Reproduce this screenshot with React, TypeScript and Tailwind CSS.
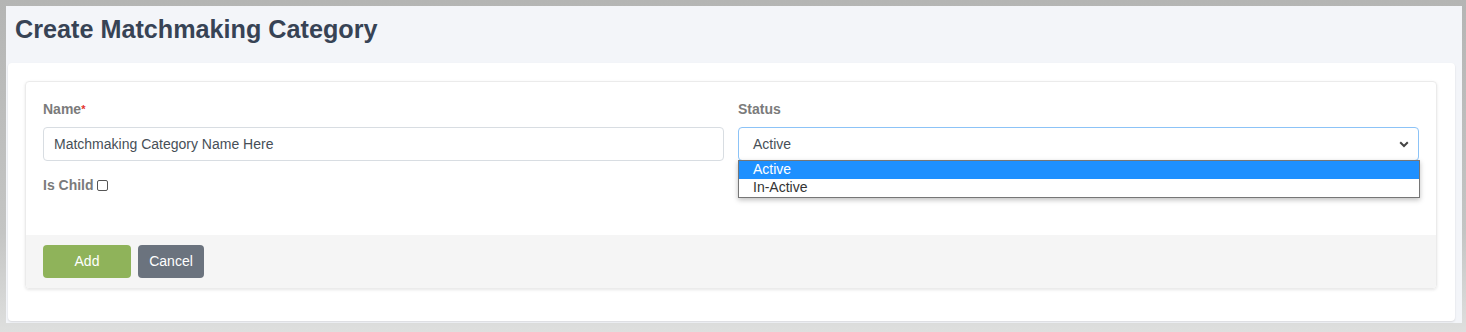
import { useState } from 'react'

const STATUS_OPTIONS = ['Active', 'In-Active']

function Label({ text, required }: { text: string; required?: boolean }) {
  return (
    <label className="block text-[14px] leading-[20px] font-bold text-[#7b7b7b] mb-[8px]">
      {text}
      {required && <span className="text-[#e3342f] text-[11px] align-top">*</span>}
    </label>
  )
}

export default function App() {
  const [name, setName] = useState('Matchmaking Category Name Here')
  const [status] = useState('Active')

  return (
    <div className="h-[332px] w-[1466px] overflow-hidden pt-[6px] pl-[6px] bg-[linear-gradient(to_bottom,#b4b5b4_0%,#c4c5c4_70%,#dedfde_100%)] font-['Liberation_Sans',Arial,sans-serif]">
      <div className="w-[1456px] h-[317px] bg-[#f3f5f9] flex flex-col">
        {/* Page header */}
        <div className="h-[57px] pl-[9px] pt-[8px]">
          <h1 className="text-[25.2px] leading-[30px] font-bold text-[#374355]">Create Matchmaking Category</h1>
        </div>

        {/* Panel */}
        <div className="ml-[2px] w-[1447px] h-[258px] bg-white rounded-[4px] shadow-[0_1px_2px_rgba(0,0,0,0.12)] pt-[18px] pl-[17px]">
          <div className="w-[1412px] h-[208px] border border-[#ebebeb] rounded-[4px] shadow-[0_1px_3px_rgba(0,0,0,0.10)] flex flex-col overflow-visible">
            {/* Card body */}
            <div className="h-[153px] px-[17px] pt-[17px] grid grid-cols-2 gap-x-[14px]">
              <div>
                <Label text="Name" required />
                <input
                  value={name}
                  onChange={(e) => setName(e.target.value)}
                  className="w-full h-[34px] border border-[#d8dde2] rounded-[4px] px-[10px] text-[14px] text-[#474f57] outline-none"
                />
                <div className="mt-[14px] flex items-center text-[14px] leading-[20px] font-bold text-[#7b7b7b]">
                  Is Child
                  <span className="ml-[3px] inline-block w-[11px] h-[11px] border border-[#555] rounded-[2px] bg-white" />
                </div>
              </div>

              <div>
                <Label text="Status" />
                <div className="relative">
                  <div className="h-[34px] border border-[#8cc3f7] rounded-[4px] pl-[14px] pr-[8px] flex items-center justify-between text-[14px] text-[#474f57] bg-white">
                    <span>{status}</span>
                    <svg width="10" height="7" viewBox="0 0 10 7" className="mr-[1px]">
                      <path d="M1.2 1.3 L5 5 L8.8 1.3" fill="none" stroke="#444" strokeWidth="2" />
                    </svg>
                  </div>

                  {/* Open option list */}
                  <div className="absolute left-0 top-[33px] w-[682px] bg-white border border-[#767676] shadow-[0_2px_5px_rgba(0,0,0,0.25)] z-10">
                    {STATUS_OPTIONS.map((opt) => (
                      <div
                        key={opt}
                        className={`h-[18px] leading-[17px] pl-[14px] text-[14px] ${opt === status ? 'bg-[#1e90ff] text-white' : 'text-[#333]'}`}
                      >
                        {opt}
                      </div>
                    ))}
                  </div>
                </div>
              </div>
            </div>

            {/* Card footer */}
            <div className="flex-1 bg-[#f5f5f5] px-[17px] pt-[10px] flex items-start gap-[7px] rounded-b-[4px]">
              <button className="w-[88px] h-[33px] rounded-[4px] bg-[#8fb35a] text-white text-[14px]">Add</button>
              <button className="w-[66px] h-[33px] rounded-[4px] bg-[#6b737e] text-white text-[14px]">Cancel</button>
            </div>
          </div>
        </div>
      </div>
    </div>
  )
}
